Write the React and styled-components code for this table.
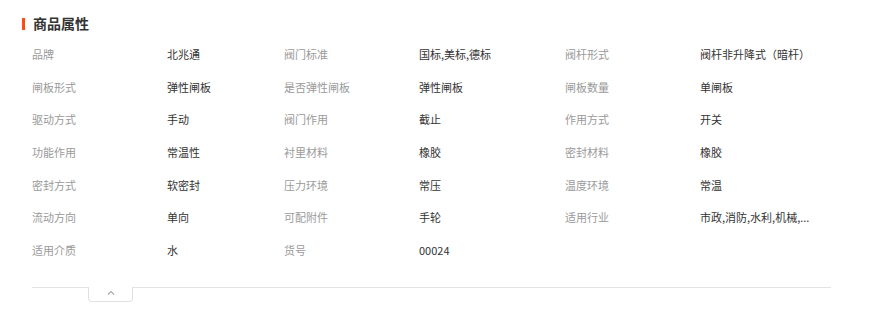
import React from 'react'
import styled, { createGlobalStyle } from 'styled-components'

const GlobalStyle = createGlobalStyle`
    body {
        margin: 0;
        background: #fff;
        font-family: "Noto Sans CJK SC", "Liberation Sans", sans-serif;
    }
`;

const Section = styled.div`
    width: 872px;
    padding: 16px 41px 0 22px;
    box-sizing: border-box;
`;

const Header = styled.div`
    display: flex;
    align-items: center;
    gap: 8px;
    height: 15px;
`;

const Bar = styled.span`
    width: 3px;
    height: 12px;
    background: #ff4a10;
`;

const Title = styled.h3`
    margin: 0;
    font-size: 14px;
    line-height: 15px;
    font-weight: 700;
    color: #333;
`;

const Grid = styled.div`
    display: grid;
    grid-template-columns: 135px 117px 135px 146px 135px 1fr;
    grid-auto-rows: 32.67px;
    align-items: center;
    margin: 6.7px 0 0 10px;
    font-size: 11px;
`;

const Label = styled.div`
    color: #9a9a9a;
    white-space: nowrap;
`;

const Value = styled.div`
    color: #333;
    white-space: nowrap;
    overflow: hidden;
`;

const Footer = styled.div`
    display: flex;
    margin: 20.6px 0 0 10px;
    height: 16px;
`;

const Line = styled.div`
    border-top: 1px solid #e3e3e3;
    width: ${p => p.w || 'auto'};
    flex: ${p => (p.w ? 'none' : 1)};
`;

const Tab = styled.div`
    width: 45px;
    height: 15px;
    box-sizing: border-box;
    border: 1px solid #e0e0e0;
    border-top: none;
    border-radius: 0 0 4px 4px;
    display: flex;
    justify-content: center;
    padding-top: 3px;
`;

const attrs = [
    ['品牌', '北兆通', '阀门标准', '国标,美标,德标', '阀杆形式', '阀杆非升降式（暗杆）'],
    ['闸板形式', '弹性闸板', '是否弹性闸板', '弹性闸板', '闸板数量', '单闸板'],
    ['驱动方式', '手动', '阀门作用', '截止', '作用方式', '开关'],
    ['功能作用', '常温性', '衬里材料', '橡胶', '密封材料', '橡胶'],
    ['密封方式', '软密封', '压力环境', '常压', '温度环境', '常温'],
    ['流动方向', '单向', '可配附件', '手轮', '适用行业', '市政,消防,水利,机械,...'],
    ['适用介质', '水', '货号', '00024'],
];

const App = () => {
    return (
        <Section>
            <GlobalStyle />
            <Header>
                <Bar />
                <Title>商品属性</Title>
            </Header>
            <Grid>
                {attrs.map((row, i) =>
                    row.map((text, j) =>
                        j % 2 === 0
                            ? <Label key={i + '-' + j}>{text}</Label>
                            : <Value key={i + '-' + j}>{text}</Value>
                    )
                )}
            </Grid>
            <Footer>
                <Line w="56px" />
                <Tab>
                    <svg width="8" height="5" viewBox="0 0 8 5">
                        <path d="M1 4.5 L4 1.5 L7 4.5" fill="none" stroke="#aaa" strokeWidth="1.2" />
                    </svg>
                </Tab>
                <Line />
            </Footer>
        </Section>
    )
}

export default App
